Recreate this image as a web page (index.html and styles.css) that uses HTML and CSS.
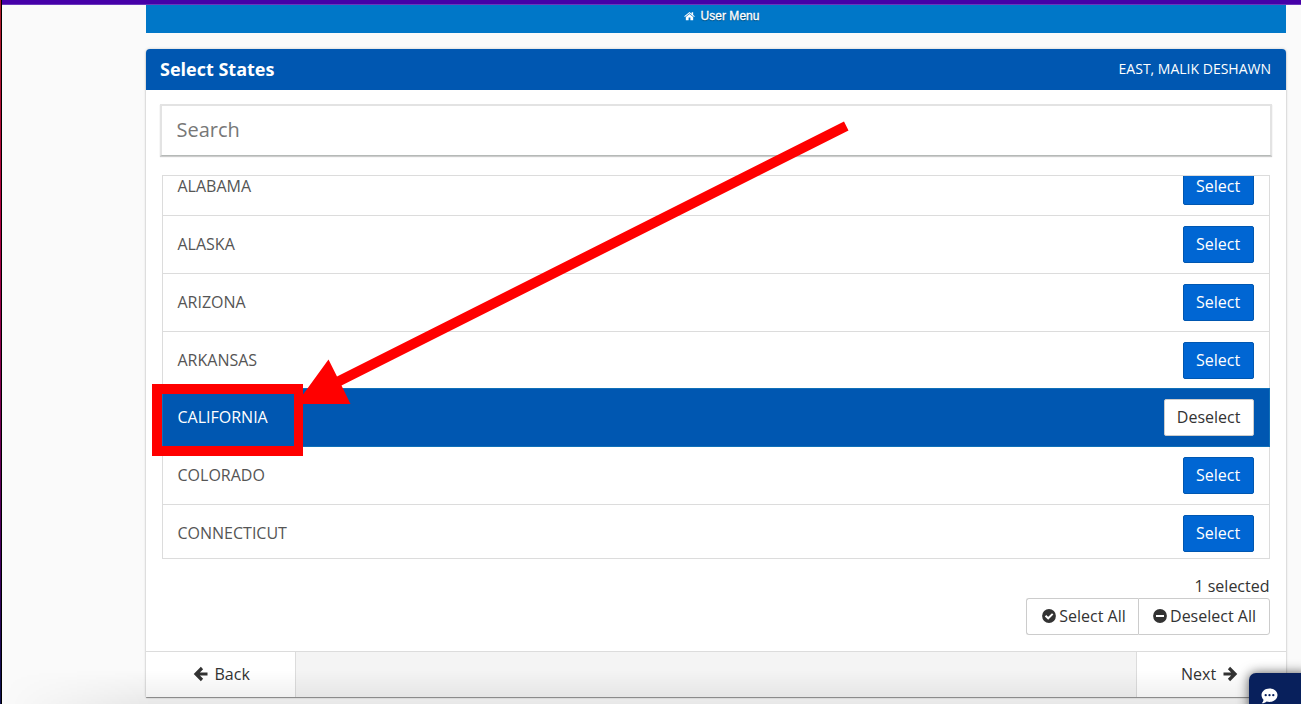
FILE: index.html
```html
<!DOCTYPE html>
<html lang="en">
<head>
<meta charset="utf-8">
<title>Select States</title>
<link rel="stylesheet" href="styles.css">
</head>
<body>
<div class="window">
  <div class="topbar"></div>
  <main class="page">
    <nav class="menu">
      <a class="menu-link"><svg class="home" viewBox="0 0 24 20"><path d="M12 1 0.5 10.8l1.4 1.5L12 3.9l10.100 8.400 1.400-1.500L20 7.800V2h-3.300v3z"/><path d="M12 5.600 4 12.200V19h6v-5.500h4V19h6v-6.800z"/></svg><span>User Menu</span></a>
    </nav>
    <section class="card">
      <header class="card-head"><h1 class="title">Select States</h1><span class="user">EAST, MALIK DESHAWN</span></header>
      <div class="card-body">
        <input class="search" type="text" placeholder="Search">
        <div class="list">
          <div class="row"><span class="name">ALABAMA</span><button class="btn">Select</button></div>
          <div class="row"><span class="name">ALASKA</span><button class="btn">Select</button></div>
          <div class="row"><span class="name">ARIZONA</span><button class="btn">Select</button></div>
          <div class="row"><span class="name">ARKANSAS</span><button class="btn">Select</button></div>
          <div class="row selected"><span class="name">CALIFORNIA</span><button class="btn plain">Deselect</button></div>
          <div class="row"><span class="name">COLORADO</span><button class="btn">Select</button></div>
          <div class="row"><span class="name">CONNECTICUT</span><button class="btn">Select</button></div>
        </div>
        <div class="count">1 selected</div>
        <div class="bulk">
          <button class="bulk-btn all"><svg class="dot" viewBox="0 0 14 14"><circle cx="7" cy="7" r="6.900"/><path class="cut" d="M3.500 6.700 6.200 9.300 10.700 4.900"/></svg>Select All</button>
          <button class="bulk-btn none"><svg class="dot" viewBox="0 0 14 14"><circle cx="7" cy="7" r="6.900"/><path class="cut" d="M3 7h8"/></svg>Deselect All</button>
        </div>
      </div>
      <footer class="card-foot">
        <a class="foot-link back"><svg class="arrow" viewBox="0 0 14 14"><path d="M13.500 7H2.500M8 1 2 7l6 6"/></svg>Back</a>
        <a class="foot-link next">Next<svg class="arrow" viewBox="0 0 14 14"><path d="M.5 7h11M6 1l6 6-6 6"/></svg></a>
      </footer>
    </section>
  </main>
  <div class="fade"></div>
  <div class="callout"></div>
  <svg class="pointer" viewBox="0 0 1301 704"><path d="M844 121.500 848.500 130.500 341.500 385.500 350.500 404H302V396L328.500 359.500 337 376.500z"/></svg>
  <div class="chat"><svg class="bubble" viewBox="0 0 17 16"><path d="M8.500.4C4 .4.500 3.300.500 7c0 1.900.8 3.500 2 4.700C2.400 13 1.700 14.200.700 15.300c2 .1 3.700-.7 4.900-1.800.9.300 1.900.4 2.900.4 4.500 0 8-3 8-6.900S13 .4 8.500.4z"/><g class="holes"><circle cx="4.700" cy="7.200" r="1.150"/><circle cx="8.500" cy="7.200" r="1.150"/><circle cx="12.300" cy="7.200" r="1.150"/></g></svg></div>
</div>
</body>
</html>
```

FILE: styles.css
```css
* { box-sizing: border-box; }
body { margin: 0; font-family: "Open Sans", "Noto Sans", sans-serif; font-size: 16px; color: #333; }
.window { position: relative; width: 1301px; height: 704px; overflow: hidden; background: #fafafa; }
.window::before { content: ""; position: absolute; inset: 0 auto 0 0; width: 2px; background: linear-gradient(90deg, transparent 50%, #000 50%), linear-gradient(#b01c2c 0, #b00040 30%, #800050 55%, #420060 80%, #101050 97%); }
.topbar { height: 5px; margin-left: 2px; background: #4600a8; border-bottom: 1px solid #6a37bb; }
.page { width: 1140px; margin-left: 146px; }
.menu { height: 28px; background: #0077c8; display: flex; justify-content: center; }
.menu-link { display: flex; height: 21px; align-items: center; gap: 5px; margin-left: 12px; font: 12px "Liberation Sans", Arial, sans-serif; letter-spacing: .05px; color: #fff; text-shadow: 0 1px 1px #00456f; -webkit-text-stroke: .3px #fff; }
.home { width: 11px; height: 10px; fill: #fff; }
.card { margin-top: 16px; height: 648px; display: flex; flex-direction: column; background: #fff; border-radius: 4px 4px 0 0; box-shadow: 0 1px 1px rgba(0,0,0,.4), 0 0 3px rgba(0,0,0,.2); }
.card-head { height: 41px; padding: 0 15px 0 14px; display: flex; align-items: center; justify-content: space-between; background: #0057b1; color: #fff; border-radius: 4px 4px 0 0; }
.title { margin: 0 0 2px; font-size: 18px; font-weight: 700; }
.user { margin-bottom: 2px; font-size: 14px; }
.card-body { flex: 1; padding: 14px 14px 0; }
.search { display: block; width: 1112px; height: 53px; padding: 0 14px 2px 14.500px; border: 2px solid #e3e3e3; border-bottom: 1px solid #b5b9b7; font: 20px "Open Sans", sans-serif; box-shadow: 0 1px 1px #ccc; outline: 0; height: 52px; margin-bottom: 19px; }
.search::placeholder { color: #777; opacity: 1; }
.list { width: 1108px; height: 384px; margin-left: 2px; overflow: hidden; border: solid #dcdcdc; border-width: 1px 0; }
.row { height: 57.800px; padding: 0 15px 0 14.500px; display: flex; align-items: center; justify-content: space-between; border: solid #dcdcdc; border-width: 0 1px 1px; color: #555; }
.row:first-child { margin-top: -17.800px; }
.row.selected { height: 58.800px; margin-top: -1px; background: #0057b1; border: 1px solid #1070b8; color: #fff; }
.name { padding-bottom: .7px; }
.btn { width: 71px; height: 37px; margin-top: .2px; padding: 0 .8px 1px 0; background: #0066d3; border: 1px solid #0057b1; border-radius: 2px; color: #fff; font: inherit; }
.btn.plain { width: 90px; background: #fff; border-color: #ccc; color: #333; }
.count { height: 22px; margin: 17px 2.500px 0 0; line-height: 20px; text-align: right; }
.bulk { display: flex; justify-content: flex-end; margin-right: 2px; }
.bulk-btn { display: flex; align-items: center; justify-content: center; gap: 3px; height: 37px; padding: 0 0 1px; background: #fff; border: 1px solid #ccc; color: #333; font: inherit; }
.all { width: 112px; padding-left: 3px; border-right: 0; border-radius: 3px 0 0 3px; }
.none { width: 132px; padding-left: 1px; border-radius: 0 3px 3px 0; }
.dot { width: 14px; height: 14px; fill: #333; }
.cut { fill: none; stroke: #fff; stroke-width: 2; }
.card-foot { height: 46px; display: flex; justify-content: space-between; background: #f4f4f4; border-top: 1px solid #dcdcdc; }
.foot-link { width: 150px; display: flex; align-items: center; padding-bottom: 1px; background: #fff; }
.back { gap: 7px; padding-left: 47.500px; border-right: 1px solid #dcdcdc; }
.next { gap: 6.500px; padding-left: 44px; border-left: 1px solid #dcdcdc; }
.arrow { width: 14px; height: 14px; fill: none; stroke: #333; stroke-width: 3.200; overflow: visible; }
.fade { position: absolute; left: 2px; right: 0; bottom: 0; height: 34px; background: linear-gradient(transparent, rgba(0,0,0,.07)); mask-image: linear-gradient(90deg, transparent, #000 150px); }
.callout { position: absolute; left: 152px; top: 384px; width: 151px; height: 72px; border: 10px solid #f00; border-right-width: 9px; }
.pointer { position: absolute; inset: 0; width: 1301px; height: 704px; fill: #f00; pointer-events: none; }
.chat { position: absolute; left: 1249px; top: 673px; width: 60px; height: 40px; padding: 15px 0 0 12px; background: #08205c; border-radius: 7px 0 0 0; box-shadow: 0 0 12px rgba(0,0,0,.65); }
.bubble { display: block; width: 17px; height: 16px; fill: #fff; }
.holes { fill: #08205c; }
```
